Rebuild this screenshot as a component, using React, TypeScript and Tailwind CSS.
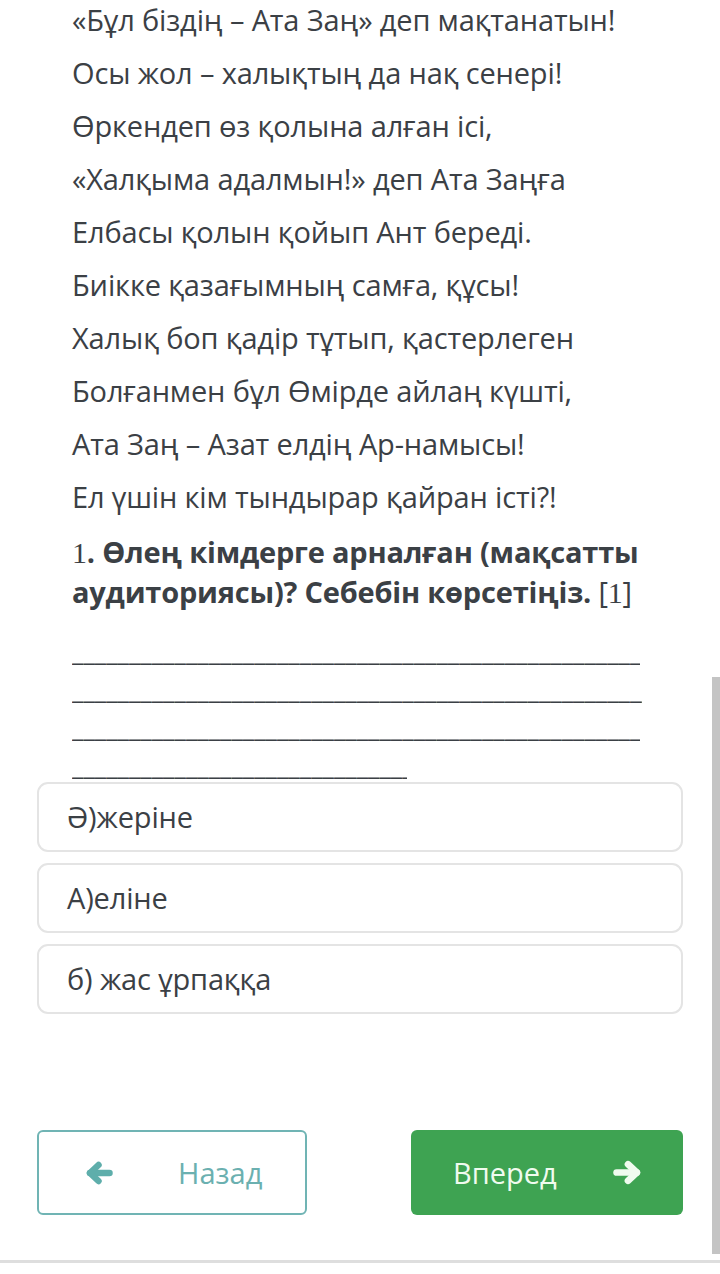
const poem = [
  "«Бұл біздің – Ата Заң» деп мақтанатын!",
  "Осы жол – халықтың да нақ сенері!",
  "Өркендеп өз қолына алған ісі,",
  "«Халқыма адалмын!» деп Ата Заңға",
  "Елбасы қолын қойып Ант береді.",
  "Биікке қазағымның самға, құсы!",
  "Халық боп қадір тұтып, қастерлеген",
  "Болғанмен бұл Өмірде айлаң күшті,",
  "Ата Заң – Азат елдің Ар-намысы!",
  "Ел үшін кім тындырар қайран істі?!",
];

const options = ["Ә)жеріне", "А)еліне", "б) жас ұрпаққа"];

// widths of the four answer blanks
const blanks = [568, 570, 568, 335];

function ChunkyArrow({ dir, className }: { dir: "left" | "right"; className?: string }) {
  return (
    <svg
      viewBox="0 0 28 24"
      className={`${className ?? ""} ${dir === "right" ? "-scale-x-100" : ""}`}
      fill="none"
      stroke="currentColor"
      strokeWidth={6.5}
      strokeLinecap="round"
      strokeLinejoin="round"
    >
      <path d="M5 12H24.5" />
      <path d="M13.5 4L5 12L13.5 20" />
    </svg>
  );
}

export default function App() {
  return (
    <div className="relative w-[720px] h-[1274px] overflow-hidden bg-white font-['Open_Sans',sans-serif] text-[#3b4045]">
      <div className="px-[37px]">
        <div className="pl-[35px] -mt-[7px]">
          {poem.map((line) => (
            <p key={line} className="text-[29px] leading-[53px] tracking-[-0.15px] whitespace-nowrap">
              {line}
            </p>
          ))}
          <p className="mt-[9px] text-[29px] leading-[39px] font-bold tracking-[-0.2px]">
            <span className="font-['Liberation_Serif',serif] font-normal text-[30px]">1</span>. Өлең кімдерге арналған (мақсатты аудиториясы)? Себебін көрсетіңіз.{" "}
            <span className="font-normal">
              [<span className="font-['Liberation_Serif',serif] text-[30px]">1</span>]
            </span>
          </p>
          <div className="mt-[20px] flex flex-col">
            {blanks.map((w, i) => (
              <div
                key={i}
                style={{ width: w }}
                className="overflow-hidden whitespace-nowrap text-[26px] leading-[38px] h-[38px]"
              >
                {"_".repeat(60)}
              </div>
            ))}
          </div>
        </div>

        <div className="-mt-[2px] flex flex-col gap-[11px]">
          {options.map((o) => (
            <div
              key={o}
              className="h-[70px] rounded-[11px] border-2 border-[#e4e4e4] pl-[28px] flex items-center text-[29px] tracking-[-0.15px]"
            >
              {o}
            </div>
          ))}
        </div>

        <div className="mt-[116px] flex justify-between">
          <button className="w-[270px] h-[85px] rounded-[6px] border-2 border-[#70b4b4] flex items-center text-[#6bb0b0] text-[29px]">
            <ChunkyArrow dir="left" className="ml-[46px] w-[28px] h-[24px] text-[#5eaeab]" />
            <span className="ml-[65px]">Назад</span>
          </button>
          <button className="w-[272px] h-[85px] rounded-[6px] bg-[#3ea352] flex items-center text-[#f0fbef] text-[29px]">
            <span className="ml-[42px]">Вперед</span>
            <ChunkyArrow dir="right" className="ml-[56px] w-[29px] h-[25px]" />
          </button>
        </div>
      </div>

      <div className="absolute right-0 top-[677px] h-[577px] w-[8px] bg-[#c4c4c4]" />
      <div className="absolute left-0 right-0 top-[1260px] h-[3px] bg-[#dedede]" />
    </div>
  );
}
